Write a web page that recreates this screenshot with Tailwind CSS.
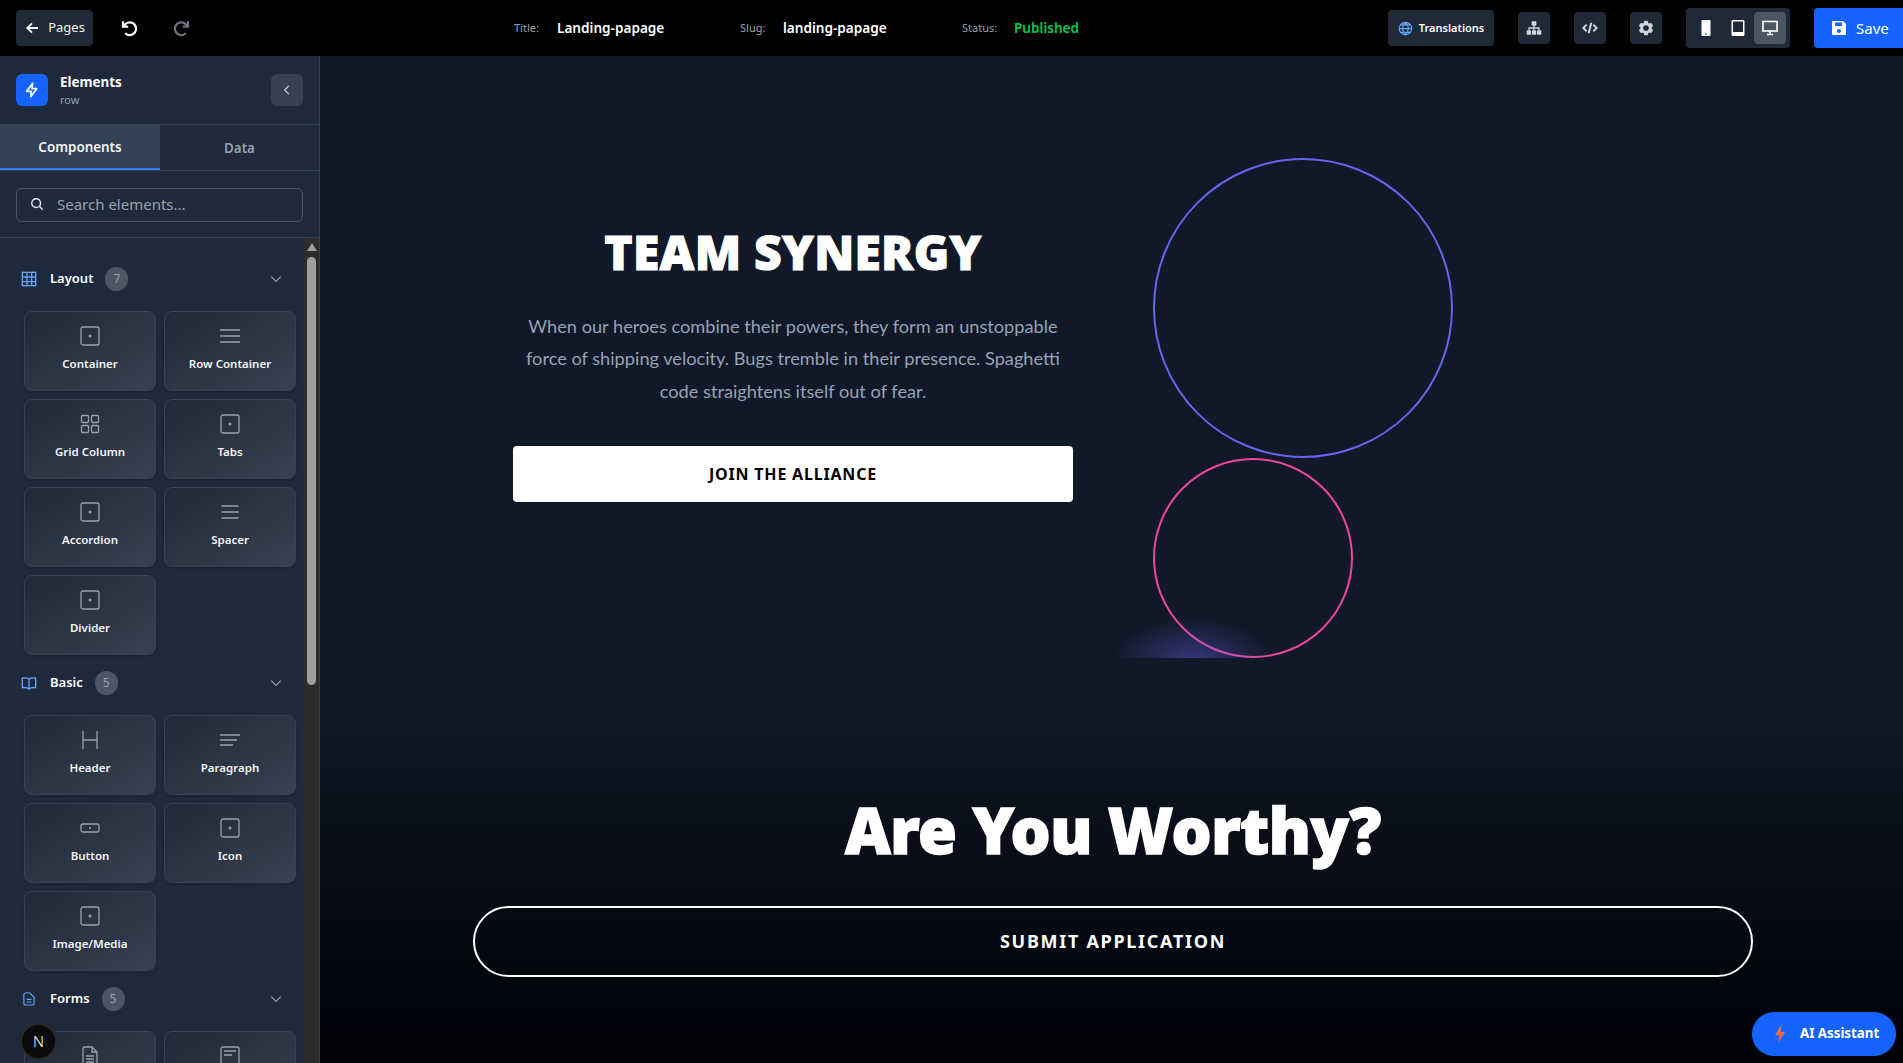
<!DOCTYPE html>
<html lang="en">
<head>
<meta charset="UTF-8">
<title>Landing-papage</title>
<script src="https://cdn.jsdelivr.net/npm/@tailwindcss/browser@4"></script>
</head>
<body class="h-screen overflow-hidden bg-black font-['Noto_Sans',sans-serif] text-white">

<!-- top bar -->
<header class="h-14 bg-black flex items-center pl-4 relative">
  <button class="h-9 w-[77px] rounded bg-[#1f2937] flex items-center justify-center gap-2 text-[13px] text-gray-100">
    <svg class="w-4 h-4" viewBox="0 0 24 24" fill="none" stroke="currentColor" stroke-width="3"><path d="M21 12H5M12 5l-7 7 7 7"/></svg>
    Pages
  </button>
  <svg class="w-[18px] h-[18px] ml-[27px]" viewBox="0 0 24 24" fill="none" stroke="#fff" stroke-width="3"><path d="M4 3v7h7M5 10a8.500 8.500 0 1 1 2 9"/></svg>
  <svg class="w-[18px] h-[18px] ml-[35px]" viewBox="0 0 24 24" fill="none" stroke="#6b7280" stroke-width="3"><path d="M20 3v7h-7M19 10a8.500 8.500 0 1 0-2 9"/></svg>

  <div class="absolute left-[514px] top-0 h-14 flex items-center text-[13.6px]">
    <span class="text-[11px] text-gray-400 w-[43px]">Title:</span><span class="font-semibold w-[183px]">Landing-papage</span>
    <span class="text-[11px] text-gray-400 w-[43px]">Slug:</span><span class="font-semibold w-[179px]">landing-papage</span>
    <span class="text-[11px] text-gray-400 w-[52px]">Status:</span><span class="font-semibold text-[#00c853]">Published</span>
  </div>

  <div class="ml-auto flex items-center gap-6">
    <button class="h-9 w-[106px] rounded bg-[#1f2937] flex items-center justify-center gap-1.5 text-[11px] font-semibold">
      <svg class="w-[15px] h-[15px]" viewBox="0 0 24 24" fill="none" stroke="#60a5fa" stroke-width="2"><circle cx="12" cy="12" r="10"/><path d="M2 12h20M4 6h16M4 18h16M12 2c-6 6-6 14 0 20M12 2c6 6 6 14 0 20"/></svg>
      Translations
    </button>
    <button class="h-8 w-8 rounded bg-[#1f2937] flex items-center justify-center">
      <svg class="w-4 h-4" viewBox="0 0 24 24" fill="#d1d5db"><rect x="8.500" y="2" width="7" height="6.500" rx="1"/><rect x="1" y="15.500" width="6.500" height="6.500" rx="1"/><rect x="8.750" y="15.500" width="6.500" height="6.500" rx="1"/><rect x="16.500" y="15.500" width="6.500" height="6.500" rx="1"/><path d="M11 8h2v3h7.500v4.500h-2V13H13v2.500h-2V13H5.500v2.500h-2V11H11z"/></svg>
    </button>
    <button class="h-8 w-8 rounded bg-[#1f2937] flex items-center justify-center">
      <svg class="w-4 h-4" viewBox="0 0 24 24" fill="none" stroke="#d1d5db" stroke-width="3"><path d="M7 7l-5 5 5 5M17 7l5 5-5 5M14 4l-4 16"/></svg>
    </button>
    <button class="h-8 w-8 rounded bg-[#1f2937] flex items-center justify-center">
      <svg class="w-[18px] h-[18px]" viewBox="0 0 24 24" fill="#d1d5db"><path fill-rule="evenodd" clip-rule="evenodd" d="M11.078 2.25c-.917 0-1.699.663-1.85 1.567L9.05 4.889c-.02.12-.115.26-.297.348a7.493 7.493 0 0 0-.986.57c-.166.115-.334.126-.45.083L6.3 5.508a1.875 1.875 0 0 0-2.282.819l-.922 1.597a1.875 1.875 0 0 0 .432 2.385l.84.692c.095.078.17.229.154.43a7.598 7.598 0 0 0 0 1.139c.015.2-.059.352-.153.43l-.841.692a1.875 1.875 0 0 0-.432 2.385l.922 1.597a1.875 1.875 0 0 0 2.282.818l1.019-.382c.115-.043.283-.031.45.082.312.214.641.405.985.57.182.088.277.228.297.35l.178 1.071c.151.904.933 1.567 1.85 1.567h1.844c.916 0 1.699-.663 1.85-1.567l.178-1.072c.02-.12.114-.26.297-.349.344-.165.673-.356.985-.57.167-.114.335-.125.45-.082l1.02.382a1.875 1.875 0 0 0 2.28-.819l.923-1.597a1.875 1.875 0 0 0-.432-2.385l-.84-.692c-.095-.078-.17-.229-.154-.43a7.614 7.614 0 0 0 0-1.139c-.016-.2.059-.352.153-.43l.84-.692c.708-.582.891-1.59.433-2.385l-.922-1.597a1.875 1.875 0 0 0-2.282-.818l-1.02.382c-.114.043-.282.031-.449-.083a7.49 7.49 0 0 0-.985-.57c-.183-.087-.277-.227-.297-.348l-.179-1.072a1.875 1.875 0 0 0-1.85-1.567h-1.843ZM12 15.750a3.750 3.750 0 1 0 0-7.500 3.750 3.750 0 0 0 0 7.500Z"/></svg>
    </button>
    <div class="h-10 w-[104px] rounded bg-[#1f2937] flex items-center px-1">
      <span class="w-8 h-8 flex items-center justify-center"><svg class="w-[10px] h-4" viewBox="0 0 10 16"><rect x="0.500" y="0" width="9" height="16" rx="1" fill="#fff"/><circle cx="5" cy="14" r=".8" fill="#1f2937"/></svg></span>
      <span class="w-8 h-8 flex items-center justify-center"><svg class="w-[14px] h-4" viewBox="0 0 14 16"><rect x="0.500" y="0" width="13" height="16" rx="1.500" fill="#fff"/><rect x="2" y="1.500" width="10" height="10.500" fill="#1f2937"/></svg></span>
      <span class="w-8 h-8 rounded bg-[#4b5563] flex items-center justify-center"><svg class="w-4 h-4" viewBox="0 0 16 16" fill="none"><rect x="1" y="1.500" width="14" height="9.500" stroke="#fff" stroke-width="1.600"/><path d="M5 14.500h6M8 11v3.500" stroke="#fff" stroke-width="1.600"/></svg></span>
    </div>
    <button class="h-10 w-[89px] rounded-l bg-[#1664ff] flex items-center pl-[17px] gap-[9px] text-[15px]">
      <svg class="w-4 h-4" viewBox="0 0 16 16" fill="#fff"><path d="M2 1h10l3 3v10a1 1 0 0 1-1 1H2a1 1 0 0 1-1-1V2a1 1 0 0 1 1-1z"/><rect x="4" y="2.500" width="7" height="3.500" fill="#1664ff"/><circle cx="8" cy="11" r="2" fill="#1664ff"/></svg>
      Save
    </button>
  </div>
</header>

<div class="flex h-[1007px]">
  <!-- elements sidebar -->
  <aside class="w-[320px] shrink-0 bg-[#1e293b] border-r border-[#334155] flex flex-col relative">
    <div class="h-[68px] shrink-0 flex items-center pl-4 pr-4">
      <span class="w-8 h-8 rounded-md bg-[#1664ff] flex items-center justify-center">
        <svg class="w-4 h-4" viewBox="0 0 24 24" fill="none" stroke="#fff" stroke-width="2.400" stroke-linejoin="round"><path d="M13 2 4 14h7l-1 8 9-12h-7z"/></svg>
      </span>
      <div class="ml-3 pt-[2px]">
        <div class="text-[13.4px] font-bold leading-[18px]">Elements</div>
        <div class="text-[11px] text-gray-400 leading-[18px]">row</div>
      </div>
      <span class="ml-auto w-8 h-8 rounded-md bg-[#374151] flex items-center justify-center">
        <svg class="w-3.5 h-3.5" viewBox="0 0 24 24" fill="none" stroke="#d1d5db" stroke-width="2"><path d="M15 5l-7 7 7 7"/></svg>
      </span>
    </div>
    <div class="h-[47px] shrink-0 flex border-y border-[#334155] text-[13.4px] font-semibold">
      <div class="w-[160px] bg-[#334155] border-b-2 border-[#2f7bf0] flex items-center justify-center pt-[2px] text-gray-100">Components</div>
      <div class="flex-1 flex items-center justify-center pt-[2px] text-gray-400">Data</div>
    </div>
    <div class="h-[67px] shrink-0 px-4 pt-[2px] flex items-center border-b border-[#334155]">
      <div class="w-full h-[34px] rounded-md border border-[#4b5563] flex items-center pl-[13px] pb-[2px] gap-[13px] text-[15px] text-gray-400">
        <svg class="w-[14px] h-[14px]" viewBox="0 0 24 24" fill="none" stroke="#e5e7eb" stroke-width="2.400"><circle cx="10.500" cy="10.500" r="7.500"/><path d="m16 16 6 6"/></svg>
        Search elements...
      </div>
    </div>

    <div class="flex-1 overflow-hidden flex">
      <div class="w-[304px] shrink-0 overflow-hidden">
        <!-- Layout -->
        <div class="h-10 mt-[21px] flex items-center pl-[21px] pr-[21px] text-[13px] font-semibold">
          <svg class="w-4 h-4 mr-[13px] shrink-0" viewBox="0 0 24 24" fill="none" stroke="#60a5fa" stroke-width="2"><rect x="2" y="2" width="20" height="20"/><path d="M2 9h20M2 16h20M9 2v20M16 2v20"/></svg>
          Layout
          <span class="ml-3 w-[23px] h-6 rounded-full bg-[#4b5563] text-xs font-normal text-gray-400 flex items-center justify-center">7</span>
          <svg class="ml-auto w-3.5 h-3.5" viewBox="0 0 24 24" fill="none" stroke="#9ca3af" stroke-width="2"><path d="m4 8 8 8 8-8"/></svg>
        </div>
        <div class="grid grid-cols-[132px_132px] gap-2 pl-6 mt-3">
          <div class="h-20 rounded-lg border border-[#374151] bg-linear-to-br from-[#1f2937] to-[#374151] flex flex-col items-center pt-[14px] text-[11.5px] font-semibold text-gray-100 shadow-sm">
            <svg class="w-5 h-5 text-gray-400" viewBox="0 0 20 20" fill="none" stroke="currentColor" stroke-width="1.300"><rect x="1" y="1" width="18" height="18" rx="2"/><circle cx="10" cy="10" r="1.500" fill="currentColor" stroke="none"/></svg>
            <span class="mt-[7px] leading-[22px]">Container</span>
          </div>
          <div class="h-20 rounded-lg border border-[#374151] bg-linear-to-br from-[#1f2937] to-[#374151] flex flex-col items-center pt-[14px] text-[11.5px] font-semibold text-gray-100 shadow-sm">
            <svg class="w-5 h-5 text-gray-400" viewBox="0 0 20 20" fill="none" stroke="currentColor" stroke-width="1.300"><path d="M0 4h20M0 10h20M0 16h20"/></svg>
            <span class="mt-[7px] leading-[22px]">Row Container</span>
          </div>
          <div class="h-20 rounded-lg border border-[#374151] bg-linear-to-br from-[#1f2937] to-[#374151] flex flex-col items-center pt-[14px] text-[11.5px] font-semibold text-gray-100 shadow-sm">
            <svg class="w-5 h-5 text-gray-400" viewBox="0 0 20 20" fill="none" stroke="currentColor" stroke-width="1.300"><rect x="1.500" y="1.500" width="7" height="7" rx="1"/><rect x="11.500" y="1.500" width="7" height="7" rx="1"/><rect x="1.500" y="11.500" width="7" height="7" rx="1"/><rect x="11.500" y="11.500" width="7" height="7" rx="1"/></svg>
            <span class="mt-[7px] leading-[22px]">Grid Column</span>
          </div>
          <div class="h-20 rounded-lg border border-[#374151] bg-linear-to-br from-[#1f2937] to-[#374151] flex flex-col items-center pt-[14px] text-[11.5px] font-semibold text-gray-100 shadow-sm">
            <svg class="w-5 h-5 text-gray-400" viewBox="0 0 20 20" fill="none" stroke="currentColor" stroke-width="1.300"><rect x="1" y="1" width="18" height="18" rx="2"/><circle cx="10" cy="10" r="1.500" fill="currentColor" stroke="none"/></svg>
            <span class="mt-[7px] leading-[22px]">Tabs</span>
          </div>
          <div class="h-20 rounded-lg border border-[#374151] bg-linear-to-br from-[#1f2937] to-[#374151] flex flex-col items-center pt-[14px] text-[11.5px] font-semibold text-gray-100 shadow-sm">
            <svg class="w-5 h-5 text-gray-400" viewBox="0 0 20 20" fill="none" stroke="currentColor" stroke-width="1.300"><rect x="1" y="1" width="18" height="18" rx="2"/><circle cx="10" cy="10" r="1.500" fill="currentColor" stroke="none"/></svg>
            <span class="mt-[7px] leading-[22px]">Accordion</span>
          </div>
          <div class="h-20 rounded-lg border border-[#374151] bg-linear-to-br from-[#1f2937] to-[#374151] flex flex-col items-center pt-[14px] text-[11.5px] font-semibold text-gray-100 shadow-sm">
            <svg class="w-5 h-5 text-gray-400" viewBox="0 0 20 20" fill="none" stroke="currentColor" stroke-width="1.300"><path d="M1.500 4h17M1.500 10h17M1.500 16h17"/></svg>
            <span class="mt-[7px] leading-[22px]">Spacer</span>
          </div>
          <div class="h-20 rounded-lg border border-[#374151] bg-linear-to-br from-[#1f2937] to-[#374151] flex flex-col items-center pt-[14px] text-[11.5px] font-semibold text-gray-100 shadow-sm">
            <svg class="w-5 h-5 text-gray-400" viewBox="0 0 20 20" fill="none" stroke="currentColor" stroke-width="1.300"><rect x="1" y="1" width="18" height="18" rx="2"/><circle cx="10" cy="10" r="1.500" fill="currentColor" stroke="none"/></svg>
            <span class="mt-[7px] leading-[22px]">Divider</span>
          </div>
        </div>
        <!-- Basic -->
        <div class="h-10 mt-2 flex items-center pl-[21px] pr-[21px] text-[13px] font-semibold">
          <svg class="w-4 h-4 mr-[13px] shrink-0" viewBox="0 0 24 24" fill="none" stroke="#60a5fa" stroke-width="2"><path d="M12 6v15M12 6c-2-1.500-6-2-10-1.500V19c4-.5 8 0 10 2 2-2 6-2.500 10-2V4.500C18 4 14 4.500 12 6z"/></svg>
          Basic
          <span class="ml-3 w-[23px] h-6 rounded-full bg-[#4b5563] text-xs font-normal text-gray-400 flex items-center justify-center">5</span>
          <svg class="ml-auto w-3.5 h-3.5" viewBox="0 0 24 24" fill="none" stroke="#9ca3af" stroke-width="2"><path d="m4 8 8 8 8-8"/></svg>
        </div>
        <div class="grid grid-cols-[132px_132px] gap-2 pl-6 mt-3">
          <div class="h-20 rounded-lg border border-[#374151] bg-linear-to-br from-[#1f2937] to-[#374151] flex flex-col items-center pt-[14px] text-[11.5px] font-semibold text-gray-100 shadow-sm">
            <svg class="w-5 h-5 text-gray-400" viewBox="0 0 20 20" fill="none" stroke="currentColor" stroke-width="1.300"><path d="M3 1v18M17 1v18M3 10h14"/></svg>
            <span class="mt-[7px] leading-[22px]">Header</span>
          </div>
          <div class="h-20 rounded-lg border border-[#374151] bg-linear-to-br from-[#1f2937] to-[#374151] flex flex-col items-center pt-[14px] text-[11.5px] font-semibold text-gray-100 shadow-sm">
            <svg class="w-5 h-5 text-gray-400" viewBox="0 0 20 20" fill="none" stroke="currentColor" stroke-width="1.300"><path d="M0 5h20M0 10h17M0 15h13"/></svg>
            <span class="mt-[7px] leading-[22px]">Paragraph</span>
          </div>
          <div class="h-20 rounded-lg border border-[#374151] bg-linear-to-br from-[#1f2937] to-[#374151] flex flex-col items-center pt-[14px] text-[11.5px] font-semibold text-gray-100 shadow-sm">
            <svg class="w-5 h-5 text-gray-400" viewBox="0 0 20 20" fill="none" stroke="currentColor" stroke-width="1.300"><rect x="1" y="6" width="18" height="8" rx="2"/><circle cx="10" cy="10" r="1" fill="currentColor" stroke="none"/></svg>
            <span class="mt-[7px] leading-[22px]">Button</span>
          </div>
          <div class="h-20 rounded-lg border border-[#374151] bg-linear-to-br from-[#1f2937] to-[#374151] flex flex-col items-center pt-[14px] text-[11.5px] font-semibold text-gray-100 shadow-sm">
            <svg class="w-5 h-5 text-gray-400" viewBox="0 0 20 20" fill="none" stroke="currentColor" stroke-width="1.300"><rect x="1" y="1" width="18" height="18" rx="2"/><circle cx="10" cy="10" r="1.500" fill="currentColor" stroke="none"/></svg>
            <span class="mt-[7px] leading-[22px]">Icon</span>
          </div>
          <div class="h-20 rounded-lg border border-[#374151] bg-linear-to-br from-[#1f2937] to-[#374151] flex flex-col items-center pt-[14px] text-[11.5px] font-semibold text-gray-100 shadow-sm">
            <svg class="w-5 h-5 text-gray-400" viewBox="0 0 20 20" fill="none" stroke="currentColor" stroke-width="1.300"><rect x="1" y="1" width="18" height="18" rx="2"/><circle cx="10" cy="10" r="1.500" fill="currentColor" stroke="none"/></svg>
            <span class="mt-[7px] leading-[22px]">Image/Media</span>
          </div>
        </div>
        <!-- Forms -->
        <div class="h-10 mt-2 flex items-center pl-[23px] pr-[21px] text-[13px] font-semibold">
          <svg class="w-3 h-4 mr-[15px] shrink-0" viewBox="0 0 14 16" fill="none" stroke="#60a5fa" stroke-width="1.400"><path d="M1 3a2 2 0 0 1 2-2h5l5 5v7a2 2 0 0 1-2 2H3a2 2 0 0 1-2-2zM4 8.500h6M4 11.500h6"/></svg>
          Forms
          <span class="ml-3 w-[23px] h-6 rounded-full bg-[#4b5563] text-xs font-normal text-gray-400 flex items-center justify-center">5</span>
          <svg class="ml-auto w-3.5 h-3.5" viewBox="0 0 24 24" fill="none" stroke="#9ca3af" stroke-width="2"><path d="m4 8 8 8 8-8"/></svg>
        </div>
        <div class="grid grid-cols-[132px_132px] gap-2 pl-6 mt-3">
          <div class="h-20 rounded-lg border border-[#374151] bg-linear-to-br from-[#1f2937] to-[#374151] flex flex-col items-center pt-[14px] text-gray-400">
            <svg class="w-5 h-5" viewBox="0 0 20 20" fill="none" stroke="currentColor" stroke-width="1.300"><path d="M3 3a2 2 0 0 1 2-2h7l5 5v11a2 2 0 0 1-2 2H5a2 2 0 0 1-2-2zM12 1v5h5M6 10h8M6 13h8M6 16h8"/></svg>
          </div>
          <div class="h-20 rounded-lg border border-[#374151] bg-linear-to-br from-[#1f2937] to-[#374151] flex flex-col items-center pt-[14px] text-gray-400">
            <svg class="w-5 h-5" viewBox="0 0 20 20" fill="none" stroke="currentColor" stroke-width="1.300"><rect x="1" y="1" width="18" height="18" rx="2"/><path d="M4 5h12M4 9h8"/></svg>
          </div>
        </div>
      </div>
      <!-- scrollbar -->
      <div class="w-[15px] bg-[#2c2c2c] flex flex-col items-center">
        <svg class="w-[10px] h-2 mt-[5px]" viewBox="0 0 10 8" fill="#9f9f9f"><path d="M5 0l5 8H0z"/></svg>
        <div class="w-[9px] h-[428px] mt-[6px] rounded-full bg-[#9f9f9f]"></div>
      </div>
    </div>

    <span class="absolute left-[20px] top-[967px] w-[37px] h-[37px] rounded-full bg-[#0a0a0a] border-2 border-[#2a2a2a] flex items-center justify-center text-[15px] font-light text-white">N</span>
  </aside>

  <!-- canvas -->
  <main class="flex-1 bg-[#111827] relative overflow-hidden">
    <section class="flex h-[634px]">
      <div class="w-[560px] ml-[193px] mt-[164px] flex flex-col items-center text-center">
        <h1 class="text-[48px] font-black leading-[64px] tracking-[0.25px] [-webkit-text-stroke:1px_white]">TEAM SYNERGY</h1>
        <p class="mt-[26px] text-[18.2px] leading-[32.4px] text-[#94a3b8] font-['Lato',sans-serif]">When our heroes combine their powers, they form an unstoppable force of shipping velocity. Bugs tremble in their presence. Spaghetti code straightens itself out of fear.</p>
        <button class="mt-[39px] w-full h-14 rounded bg-white text-black text-[16px] font-bold tracking-[0.8px]">JOIN THE ALLIANCE</button>
      </div>
      <div class="ml-[80px] mt-[102px] w-[300px] relative self-start">
        <div class="w-[300px] h-[300px] rounded-full border-2 border-[#6366f1]"></div>
        <div class="w-[200px] h-[200px] rounded-full border-2 border-[#ec4899]"></div>
        <div class="absolute left-[-40px] bottom-0 w-[160px] h-10 overflow-hidden">
          <div class="w-[160px] h-20 bg-[radial-gradient(closest-side,#6366f166,transparent)]"></div>
        </div>
      </div>
    </section>
    <section class="h-[373px] pl-[3px] flex flex-col items-center bg-linear-to-b from-[#111827] to-[#020308]">
      <h2 class="mt-[100px] text-[63px] font-black leading-[80px] tracking-[-0.5px] [-webkit-text-stroke:1.5px_white]">Are You Worthy?</h2>
      <button class="mt-9 w-[1280px] h-[71px] rounded-full border-2 border-white text-[18px] font-bold tracking-[1.7px]">SUBMIT APPLICATION</button>
    </section>
    <button class="absolute right-[7px] bottom-[7px] w-[144px] h-11 rounded-full bg-[#1664ff] flex items-center pl-[21px] gap-[13px] text-[13.3px] font-bold">
      <svg class="w-[14px] h-[18px]" viewBox="0 0 14 18"><defs><linearGradient id="bolt" x1="0" y1="0" x2="0" y2="1"><stop offset="0" stop-color="#fb923c"/><stop offset="1" stop-color="#ef4444"/></linearGradient></defs><path d="M8.500 0 2 10h4.500L5 18l7-11H7.500z" fill="url(#bolt)"/></svg>
      AI Assistant
    </button>
  </main>
</div>
</body>
</html>
